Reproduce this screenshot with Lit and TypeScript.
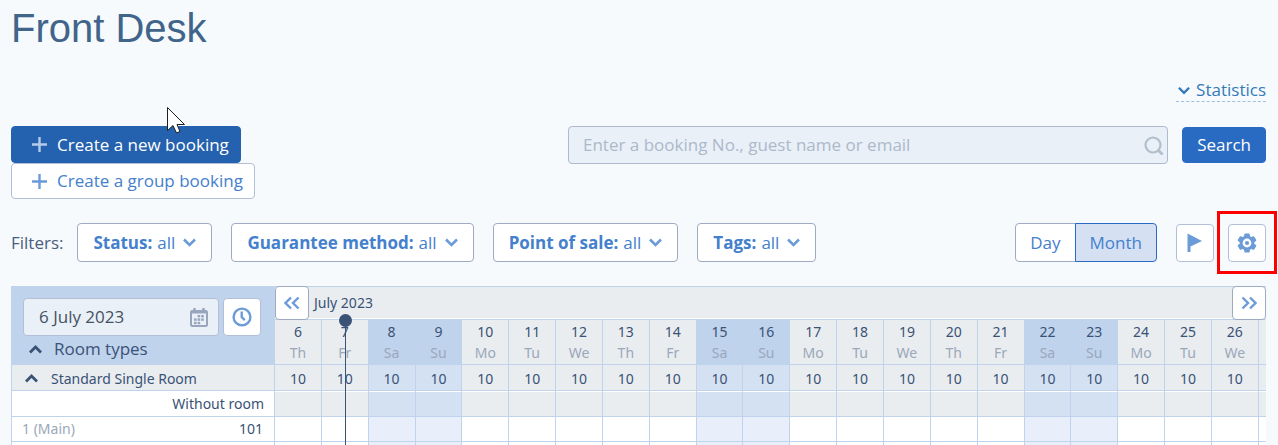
import { LitElement, html, css, svg } from "lit";
import { customElement, property, state } from "lit/decorators.js";
import { classMap } from "lit/directives/class-map.js";

type Day = { num: number; name: string; weekend: boolean; today: boolean };

const WEEKDAYS = ["Su", "Mo", "Tu", "We", "Th", "Fr", "Sa"];

const DAYS: Day[] = Array.from({ length: 21 }, (_, i) => {
  const num = 6 + i;
  const weekday = new Date(2023, 6, num).getDay();
  return {
    num,
    name: WEEKDAYS[weekday],
    weekend: weekday === 0 || weekday === 6,
    today: num === 7,
  };
});

const FILTERS = [
  { id: "status", label: "Status:" },
  { id: "guarantee", label: "Guarantee method:" },
  { id: "pos", label: "Point of sale:" },
  { id: "tags", label: "Tags:" },
];

const gearTeeth = [0, 60, 120, 180, 240, 300].map(
  (a) => svg`<rect x="7.2" y="0.5" width="5.6" height="6" rx="1" transform="rotate(${a} 10 10)"></rect>`
);

const gearIcon = html`<svg width="20" height="20" viewBox="0 0 20 20" aria-hidden="true">
  <g fill="#6b9bd8">${gearTeeth}</g>
  <circle cx="10" cy="10" r="5.9" fill="#fff" stroke="#6b9bd8" stroke-width="3"></circle>
  <circle cx="10" cy="10" r="2.1" fill="#6b9bd8"></circle>
</svg>`;

const flagIcon = html`<svg width="16" height="20" viewBox="0 0 16 20" aria-hidden="true">
  <path d="M0.5 0.5 L15 8 L3.5 13.5 V19 H0.5 Z" fill="#6b9bd8"></path>
</svg>`;

const plusIcon = html`<svg width="15" height="15" viewBox="0 0 15 15" aria-hidden="true">
  <path d="M7.5 0 V15 M0 7.5 H15" stroke="currentColor" stroke-width="2.4" fill="none"></path>
</svg>`;

const clockIcon = html`<svg width="20" height="20" viewBox="0 0 20 20" aria-hidden="true">
  <circle cx="10" cy="10" r="8.4" fill="#fff" stroke="#6b9bd8" stroke-width="2.4"></circle>
  <path d="M9.7 4.5 V10 L12.8 13.2" stroke="#6b9bd8" stroke-width="2.4" fill="none"></path>
</svg>`;

const calendarIcon = html`<svg width="18" height="19" viewBox="0 0 18 19" aria-hidden="true">
  <rect x="1" y="3" width="16" height="15" rx="1.5" fill="none" stroke="#98a6bd" stroke-width="2"></rect>
  <path d="M1 4 H17" stroke="#98a6bd" stroke-width="3"></path>
  <path d="M4.5 0 V3 M13.5 0 V3" stroke="#98a6bd" stroke-width="2.4"></path>
  <g fill="#98a6bd">
    ${[
      [7.6, 7], [11.2, 7],
      [4, 10.4], [7.6, 10.4], [11.2, 10.4],
      [4, 13.8], [7.6, 13.8],
    ].map(([x, y]) => svg`<rect x=${x} y=${y} width="2.6" height="2.4"></rect>`)}
  </g>
</svg>`;

const magnifierIcon = html`<svg width="20" height="20" viewBox="0 0 20 20" aria-hidden="true">
  <circle cx="9" cy="10" r="7.5" fill="none" stroke="#b1becb" stroke-width="2.2"></circle>
  <path d="M14 15 L18.5 19.5" stroke="#b1becb" stroke-width="2.8"></path>
</svg>`;

const chevron = (dir: "up" | "down", width: number, color: string, stroke: number) => html`<svg
  width=${width} height="9" viewBox="0 0 13 9" aria-hidden="true">
  <path d=${dir === "down" ? "M1 1.5 L6.5 7 L12 1.5" : "M1 7.5 L6.5 2 L12 7.5"}
    fill="none" stroke=${color} stroke-width=${stroke}></path>
</svg>`;

const doubleChevron = (dir: "left" | "right") => html`<svg width="16" height="14" viewBox="0 0 16 14" aria-hidden="true">
  <path d=${dir === "left" ? "M7 1.5 L1.5 7 L7 12.5 M14.5 1.5 L9 7 L14.5 12.5" : "M1.5 1.5 L7 7 L1.5 12.5 M9 1.5 L14.5 7 L9 12.5"}
    fill="none" stroke="#6b9bd8" stroke-width="2.4"></path>
</svg>`;

@customElement("filter-select")
class FilterSelect extends LitElement {
  @property() label = "";
  @property() name = "";

  static styles = css`
    :host {
      display: block;
    }
    .box {
      display: flex;
      align-items: center;
      box-sizing: border-box;
      height: 39px;
      padding: 0 15px;
      border: 1px solid #9fabc2;
      border-radius: 4px;
      background: #fff;
      color: #4480cd;
    }
    .name {
      font-weight: 700;
      white-space: nowrap;
    }
    .value {
      appearance: none;
      field-sizing: content;
      margin: 0 8px 0 5px;
      padding: 0;
      border: 0;
      background: transparent;
      color: inherit;
      font: inherit;
    }
  `;

  render() {
    return html`<div class="box">
      <label class="name" for=${this.name}>${this.label}</label>
      <select class="value" id=${this.name}><option>all</option></select>
      ${chevron("down", 13, "#6b9bd8", 2.6)}
    </div>`;
  }
}

@customElement("booking-grid")
class BookingGrid extends LitElement {
  static styles = css`
    :host {
      display: block;
      color: #3a5275;
      font-family: "Noto Sans", "Open Sans", sans-serif;
      font-size: 14px;
      line-height: 20px;
    }
    .grid {
      width: 100%;
      table-layout: fixed;
      border-collapse: separate;
      border-spacing: 0;
      border-left: 1px solid #bfd3ed;
    }
    .side {
      width: 263px;
    }
    .rest {
      width: 7px;
    }
    th,
    td {
      box-sizing: border-box;
      padding: 0;
      font-weight: 400;
      border-right: 1px solid #bfd3ed;
      border-bottom: 1px solid #bfd3ed;
      text-align: center;
      background: #fff;
    }
    .last {
      border-right: 0;
    }
    .corner {
      vertical-align: top;
      background: #bfd3ed;
      text-align: left;
    }
    .pickers {
      display: flex;
      gap: 4px;
      padding: 12px 13px 0 11px;
    }
    .date {
      display: flex;
      align-items: center;
      flex: 1;
      min-width: 0;
      box-sizing: border-box;
      height: 38px;
      padding: 0 10px 0 15px;
      border: 1px solid #b3bfd6;
      border-radius: 4px;
      background: #e9f0f8;
    }
    .date-input {
      flex: 1;
      min-width: 0;
      padding: 0;
      border: 0;
      outline: 0;
      background: transparent;
      color: #46505f;
      font-family: "Open Sans", "Noto Sans", sans-serif;
      font-size: 17px;
      line-height: 22px;
    }
    .icon-button {
      display: flex;
      align-items: center;
      justify-content: center;
      box-sizing: border-box;
      width: 38px;
      height: 38px;
      padding: 0;
      border: 1px solid #b3bfd6;
      border-radius: 4px;
      background: #fff;
    }
    .fold {
      display: flex;
      align-items: center;
      padding: 0;
      border: 0;
      background: transparent;
      color: inherit;
      font: inherit;
    }
    .fold-types {
      gap: 12px;
      padding: 2px 0 0 17px;
      font-family: "Open Sans", "Noto Sans", sans-serif;
      font-size: 17px;
      line-height: 22px;
    }
    .fold-room {
      gap: 13px;
      padding-left: 13px;
    }
    .month {
      height: 34px;
      background: #e9edf0;
      border-top: 1px solid #bfd3ed;
      border-right: 0;
      box-shadow: inset 0 -1px #fff;
    }
    .month-bar {
      display: flex;
      align-items: center;
      margin: -1px 0;
    }
    .month-name {
      flex: 1;
      padding-left: 5px;
      text-align: left;
    }
    .nav {
      width: 34px;
      height: 34px;
      border-color: #9fabc2;
    }
    .day {
      position: relative;
      height: 45px;
      line-height: 21px;
      background: #e9edf0;
    }
    .day.weekend {
      background: #bfd3ed;
    }
    .weekday {
      display: block;
      color: #9ba7ba;
    }
    .now {
      position: absolute;
      z-index: 1;
      top: -6px;
      left: calc(50% - 6px);
      width: 13px;
      height: 13px;
      border-radius: 50%;
      background: #3a5275;
    }
    .now::after {
      content: "";
      position: absolute;
      top: 6px;
      left: 6px;
      width: 1px;
      height: 100vh;
      background: #3a5275;
    }
    .count {
      height: 26px;
      background: #e9edf0;
    }
    .vacant {
      height: 26px;
      background: #e9edf0;
      box-shadow: inset 0 1px #fff;
    }
    .count.weekend,
    .vacant.weekend {
      background: #d4e1f3;
    }
    .group,
    .count {
      padding-top: 2px;
    }
    .cell {
      height: 25px;
    }
    .cell.weekend {
      background: #e8effa;
    }
    .group {
      background: #e9edf0;
    }
    .caption {
      padding-right: 10px;
      text-align: right;
    }
    .room {
      display: flex;
      justify-content: space-between;
      padding: 0 11px 0 10px;
    }
    .floor {
      color: #9ba7ba;
    }
  `;

  private cells(kind: string, value: string) {
    return html`${DAYS.map(
      (d) => html`<td class=${classMap({ [kind]: true, weekend: d.weekend })}>${value}</td>`
    )}<td class=${kind + " last"}></td>`;
  }

  render() {
    return html`<table class="grid">
      <colgroup>
        <col class="side" />
        ${DAYS.map(() => html`<col />`)}
        <col class="rest" />
      </colgroup>
      <thead>
        <tr>
          <th class="corner" rowspan="2">
            <div class="pickers">
              <div class="date">
                <input class="date-input" type="text" aria-label="Date" value="6 July 2023" />
                ${calendarIcon}
              </div>
              <button class="icon-button" aria-label="Today">${clockIcon}</button>
            </div>
            <button class="fold fold-types">${chevron("up", 13, "#3a5275", 2.8)}Room types</button>
          </th>
          <th class="month" colspan="22">
            <div class="month-bar">
              <button class="icon-button nav" aria-label="Earlier">${doubleChevron("left")}</button>
              <span class="month-name">July 2023</span>
              <button class="icon-button nav" aria-label="Later">${doubleChevron("right")}</button>
            </div>
          </th>
        </tr>
        <tr>
          ${DAYS.map(
            (d) => html`<th class=${classMap({ day: true, weekend: d.weekend })}>
              ${d.num}<span class="weekday">${d.name}</span>${d.today ? html`<span class="now"></span>` : ""}
            </th>`
          )}
          <th class="day last"></th>
        </tr>
      </thead>
      <tbody>
        <tr>
          <th class="group">
            <button class="fold fold-room">${chevron("up", 13, "#3a5275", 2.8)}Standard Single Room</button>
          </th>
          ${this.cells("count", "10")}
        </tr>
        <tr>
          <th class="caption">Without room</th>
          ${this.cells("vacant", "")}
        </tr>
        <tr>
          <th><div class="room"><span class="floor">1 (Main)</span><span>101</span></div></th>
          ${this.cells("cell", "")}
        </tr>
        <tr>
          <th></th>
          ${this.cells("cell", "")}
        </tr>
      </tbody>
    </table>`;
  }
}

@customElement("app-root")
class AppRoot extends LitElement {
  @state() private view: "Day" | "Month" = "Month";

  static styles = css`
    :host {
      display: block;
      position: relative;
      box-sizing: border-box;
      height: 100vh;
      overflow: hidden;
      padding: 0 12px 0 11px;
      background: #f6fafd;
      font-family: "Open Sans", "Noto Sans", sans-serif;
      font-size: 17px;
      line-height: 22px;
    }
    .title {
      margin: 0;
      color: #41648a;
      font-family: "Liberation Sans", sans-serif;
      font-size: 40px;
      font-weight: 400;
      line-height: 56px;
    }
    .stats-row {
      display: flex;
      justify-content: flex-end;
      padding: 23px 0 24px;
    }
    .stats {
      display: flex;
      align-items: center;
      gap: 6px;
      padding-left: 2px;
      border-bottom: 1px dashed #9dc0e0;
      color: #337ab7;
      text-decoration: none;
    }
    .toolbar {
      display: flex;
      justify-content: space-between;
      align-items: flex-start;
    }
    .create {
      display: flex;
      flex-direction: column;
      align-items: flex-start;
    }
    .button {
      display: flex;
      align-items: center;
      box-sizing: border-box;
      height: 36px;
      padding: 0 11px;
      border: 1px solid #b3bfd6;
      border-radius: 4px;
      background: #fff;
      color: #4480cd;
      font: inherit;
    }
    .new,
    .group {
      gap: 10px;
      padding-left: 20px;
    }
    .new {
      height: 37px;
      border-color: #2461ae;
      background: #2461ae;
      color: #fff;
    }
    .search {
      display: flex;
      align-items: center;
      gap: 14px;
      width: 698px;
    }
    .search-box {
      display: flex;
      align-items: center;
      flex: 1;
      box-sizing: border-box;
      height: 38px;
      padding: 0 3px 0 14px;
      border: 1px solid #b0b9d0;
      border-radius: 4px;
      background: #e9f0f8;
    }
    .search-input {
      flex: 1;
      min-width: 0;
      padding: 0;
      border: 0;
      outline: 0;
      background: transparent;
      font: inherit;
    }
    .search-input::placeholder {
      color: #adb9ca;
    }
    .search-button {
      padding: 0 14px;
      border-color: #296bc2;
      background: #296bc2;
      color: #fff;
    }
    .filters {
      display: flex;
      align-items: center;
      padding: 24px 0;
    }
    .filters-label {
      color: #4a5d7d;
      margin-right: 14px;
    }
    .filter-list {
      display: flex;
      flex: 1;
      gap: 19px;
    }
    .views {
      display: flex;
      margin-right: 19px;
    }
    .view {
      box-sizing: border-box;
      height: 39px;
      padding: 0 14px;
      border: 1px solid #9fabc2;
      border-radius: 4px 0 0 4px;
      background: #fff;
      color: #4480cd;
      font: inherit;
    }
    .view + .view {
      margin-left: -1px;
      border-radius: 0 4px 4px 0;
    }
    .view.active {
      position: relative;
      border-color: #296bc2;
      background: #d5e1f3;
    }
    .actions {
      display: flex;
      gap: 14px;
    }
    .action {
      position: relative;
      display: flex;
      align-items: center;
      justify-content: center;
      box-sizing: border-box;
      width: 38px;
      height: 38px;
      padding: 0;
      border: 1px solid #b3bfd6;
      border-radius: 4px;
      background: #fff;
    }
    .highlight::after {
      content: "";
      position: absolute;
      inset: -14px -12px -13px;
      border: 3px solid #f00;
    }
    .pointer {
      position: absolute;
      top: 106px;
      left: 166px;
    }
    .plus-new {
      display: flex;
      color: #b5cbe8;
    }
    .plus-group {
      display: flex;
      color: #6b9bd8;
    }
  `;

  render() {
    return html`
      <h1 class="title">Front Desk</h1>
      <div class="stats-row">
        <a class="stats" href="#statistics">${chevron("down", 12, "#337ab7", 2.6)}Statistics</a>
      </div>
      <div class="toolbar">
        <div class="create">
          <button class="button new"><span class="plus-new">${plusIcon}</span>Create a new booking</button>
          <button class="button group"><span class="plus-group">${plusIcon}</span>Create a group booking</button>
        </div>
        <div class="search">
          <div class="search-box">
            <input class="search-input" type="text" aria-label="Search bookings"
              placeholder="Enter a booking No., guest name or email" />
            ${magnifierIcon}
          </div>
          <button class="button search-button">Search</button>
        </div>
      </div>
      <div class="filters">
        <span class="filters-label">Filters:</span>
        <div class="filter-list">
          ${FILTERS.map((f) => html`<filter-select name=${f.id} label=${f.label}></filter-select>`)}
        </div>
        <div class="views">
          ${(["Day", "Month"] as const).map(
            (v) => html`<button class=${classMap({ view: true, active: this.view === v })}
              aria-pressed=${this.view === v} @click=${() => (this.view = v)}>${v}</button>`
          )}
        </div>
        <div class="actions">
          <button class="action" aria-label="Flags">${flagIcon}</button>
          <button class="action highlight" aria-label="Settings">${gearIcon}</button>
        </div>
      </div>
      <booking-grid></booking-grid>
      <svg class="pointer" width="20" height="29" viewBox="0 0 20 29" aria-hidden="true">
        <path d="M1.5 1.5 V24.5 L7 19.5 L10.5 27 L14 25.5 L11 18.5 H18.5 Z" fill="#fff" stroke="#1a1f26"></path>
      </svg>
    `;
  }
}
